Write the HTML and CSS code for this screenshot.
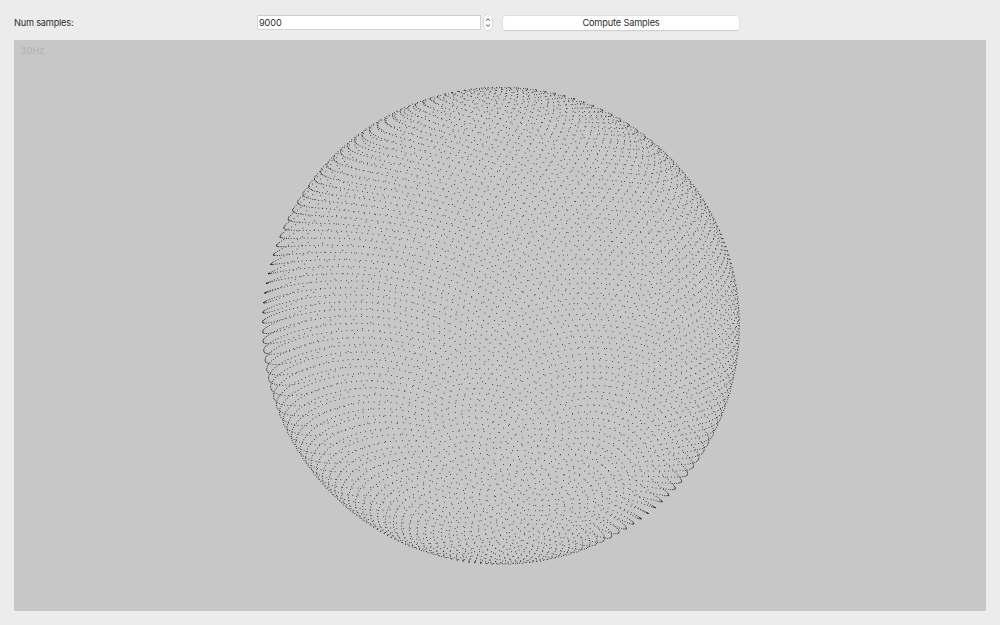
FILE: index.html
```html
<!DOCTYPE html>
<html lang="en">
<head>
<meta charset="utf-8">
<title>Sphere Samples</title>
<link rel="stylesheet" href="styles.css">
</head>
<body>
<div class="window">
  <div class="toolbar">
    <label class="label" for="num">Num samples:</label>
    <div class="spin">
      <input class="field" id="num" type="text" value="9000">
      <div class="stepper">
        <svg width="8" height="15" viewBox="0 0 8 15" fill="none" stroke="#444" stroke-width="1"><path d="M2.2 5.6 4 3.9 5.8 5.6M2.2 9.6 4 11.3 5.8 9.6"/></svg>
      </div>
    </div>
    <button class="button" type="button">Compute Samples</button>
  </div>
  <div class="viewport">
    <span class="rate">30Hz</span>
    <canvas class="sphere" id="sphere" width="972" height="571"></canvas>
  </div>
</div>
<script src="app.js"></script>
</body>
</html>
```
FILE: styles.css
```css
body {
  margin: 0;
  background: #ececec;
  font-family: Inter, "Open Sans", sans-serif;
  font-size: 9.2px;
  color: #2c2c2c;
}

.window {
  box-sizing: border-box;
  width: 1000px;
  height: 625px;
  padding: 15px 14px 14px;
  display: flex;
  flex-direction: column;
  gap: 10px;
}

.toolbar {
  height: 15px;
  display: grid;
  grid-template-columns: 243px 246px 236px;
  align-items: center;
}

.label {
  line-height: 15px;
  letter-spacing: -.2px;
}

.spin {
  display: flex;
  gap: 3px;
}

.field {
  box-sizing: border-box;
  width: 224px;
  height: 15px;
  margin: 0;
  padding: 0 1px 1px;
  border: 1px solid #d6d6d6;
  border-top-color: #cdcdcd;
  border-radius: 0;
  outline: 0;
  background: #fff;
  font: inherit;
  letter-spacing: -.1px;
  color: inherit;
}

.stepper {
  width: 8px;
  height: 15px;
  border-radius: 4px;
  background: #fff;
  box-shadow: 0 0 0 .5px #c8c8c8;
}

.stepper svg { display: block; }

.button {
  width: 236px;
  height: 14px;
  padding: 0 0 1px;
  border: 0;
  border-radius: 2.5px;
  background: #fff;
  box-shadow: 0 0 0 .5px #dadada, 0 .5px 1px #c4c4c4;
  font: inherit;
  letter-spacing: -.15px;
  line-height: 13px;
  color: inherit;
}

.viewport {
  position: relative;
  width: 972px;
  height: 571px;
  background: #c7c7c7;
}

.rate {
  position: absolute;
  left: 7px;
  top: 5px;
  line-height: 12px;
  color: #b0b0b0;
}

.sphere { display: block; }
```
FILE: app.js
```js
// Fibonacci sphere seen through a perspective camera.
const COUNT = 9000;
const GOLDEN = (Math.sqrt(5) - 1) / 2;
const DEG = Math.PI / 180;

const view = { roll: 94.6003 * DEG, tilt: 49.5433 * DEG, limb: 19.4334 * DEG, spin: 0.4487 };
const centre = { x: 486.8, y: 285.5 };
const radius = 238.5;

// Orthonormal frame whose third vector is the spiral's axis.
const q = Math.sin(view.tilt);
const axis = [q * Math.cos(view.roll), q * Math.sin(view.roll), Math.cos(view.tilt)];
const u = [-Math.sin(view.roll), Math.cos(view.roll), 0];
const v = [
  axis[1] * u[2] - axis[2] * u[1],
  axis[2] * u[0] - axis[0] * u[2],
  axis[0] * u[1] - axis[1] * u[0],
];

const ctx = document.getElementById('sphere').getContext('2d');
ctx.fillStyle = 'rgba(0, 0, 0, .95)';

const snap = n => Math.floor(n * 3) / 3;

for (let i = 0; i < COUNT; i++) {
  const z = 1 - (2 * i + 1) / COUNT;
  const r = Math.sqrt(1 - z * z);
  const a = -2 * Math.PI * (i * GOLDEN + view.spin);
  const [px, py, pz] = [0, 1, 2].map(k => r * Math.cos(a) * u[k] + r * Math.sin(a) * v[k] + z * axis[k]);
  const scale = radius * Math.cos(view.limb) / (1 - pz * Math.sin(view.limb));
  ctx.fillRect(snap(centre.x + px * scale), snap(centre.y - py * scale), .8, .8);
}
```
